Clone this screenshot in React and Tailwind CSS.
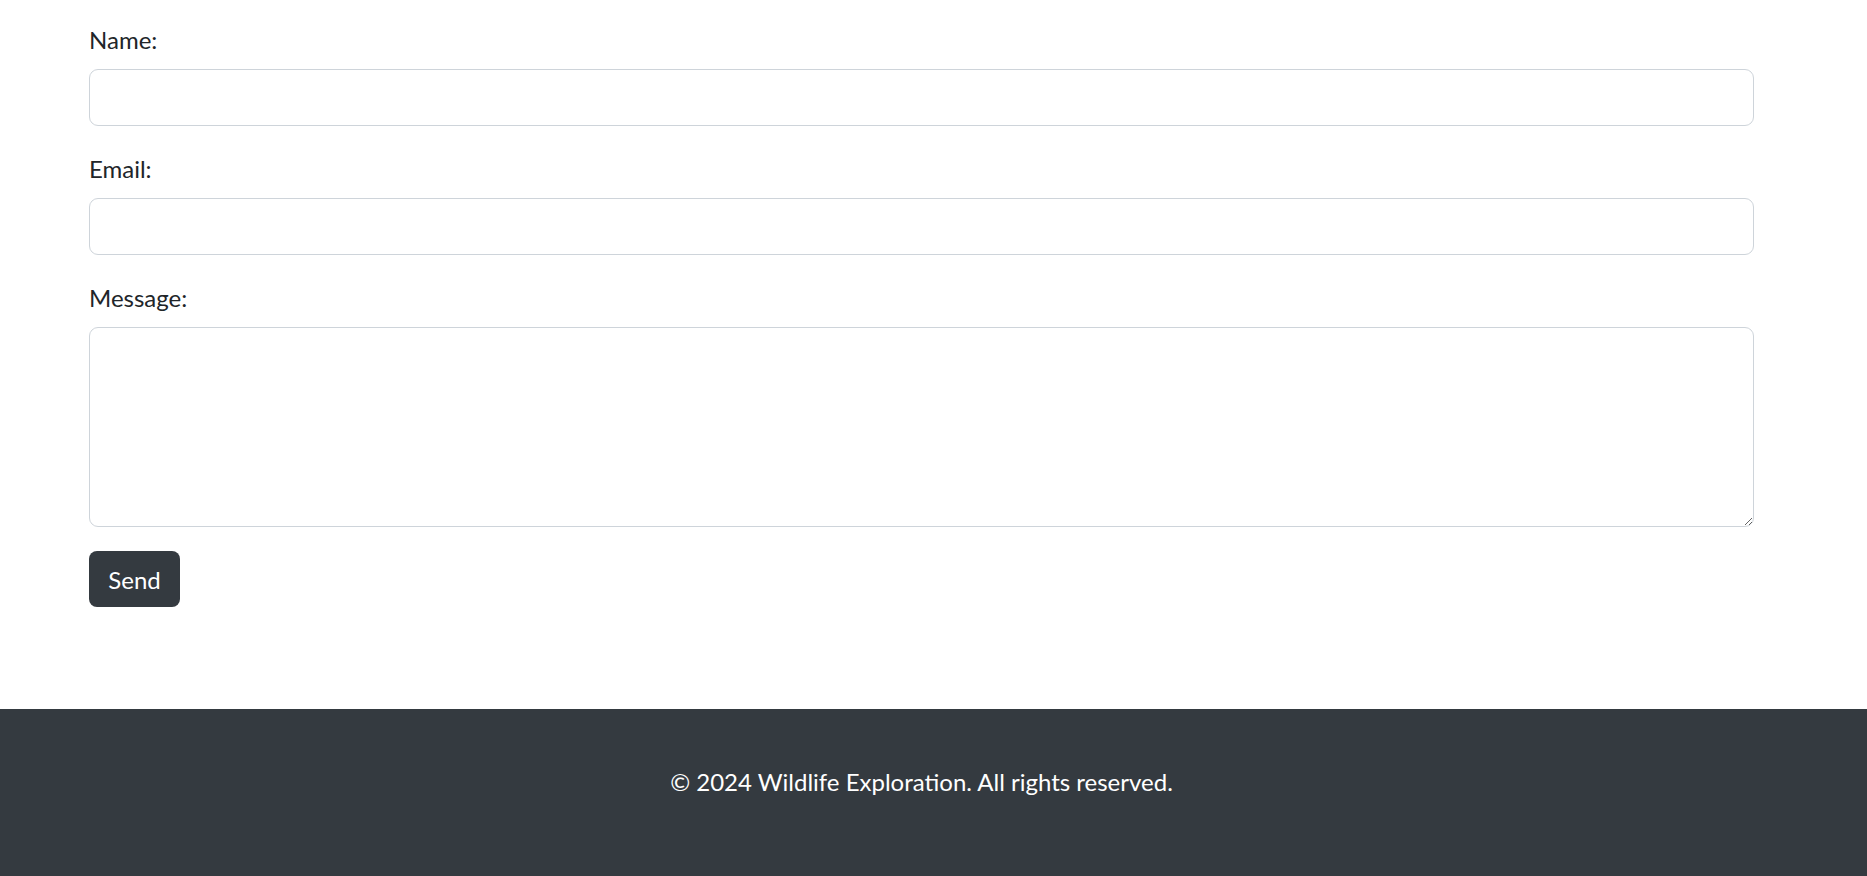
import React, { useState } from "react";

export default function App() {
  const [name, setName] = useState("");
  const [email, setEmail] = useState("");
  const [message, setMessage] = useState("");

  const fieldClass =
    "block w-full border border-[#ced4da] rounded-[9px] bg-white px-[18px] text-[24px] text-[#212529] outline-none";

  return (
    <div className="min-h-screen bg-white font-['Lato','Liberation_Sans',sans-serif] text-[#212529]">
      {/* Contact form */}
      <section className="pt-[21px] pb-[102px]">
        <form className="ml-[89px] w-[1665px]" onSubmit={(e) => e.preventDefault()}>
          <div className="mb-[24px]">
            <label htmlFor="name" className="block mb-[12px] pt-[2px] text-[24px] leading-[34px]">
              Name:
            </label>
            <input
              id="name"
              type="text"
              value={name}
              onChange={(e) => setName(e.target.value)}
              className={fieldClass + " h-[57px]"}
            />
          </div>

          <div className="mb-[24px]">
            <label htmlFor="email" className="block mb-[12px] pt-[2px] text-[24px] leading-[34px]">
              Email:
            </label>
            <input
              id="email"
              type="email"
              value={email}
              onChange={(e) => setEmail(e.target.value)}
              className={fieldClass + " h-[57px]"}
            />
          </div>

          <div className="mb-[24px]">
            <label htmlFor="message" className="block mb-[12px] pt-[2px] text-[24px] leading-[34px]">
              Message:
            </label>
            <textarea
              id="message"
              rows={5}
              value={message}
              onChange={(e) => setMessage(e.target.value)}
              className={fieldClass + " h-[200px] py-[9px]"}
            />
          </div>

          <button
            type="submit"
            className="h-[56px] w-[91px] rounded-[8px] bg-[#343a40] pt-[2px] text-[24px] leading-[34px] text-white"
          >
            Send
          </button>
        </form>
      </section>

      {/* Footer */}
      <footer className="bg-[#343a40] pt-[55px] pb-[76px] text-white">
        <div className="w-[1843px] text-center text-[24px] leading-[36px]">
          © 2024 Wildlife Exploration. All rights reserved.
        </div>
      </footer>
    </div>
  );
}
